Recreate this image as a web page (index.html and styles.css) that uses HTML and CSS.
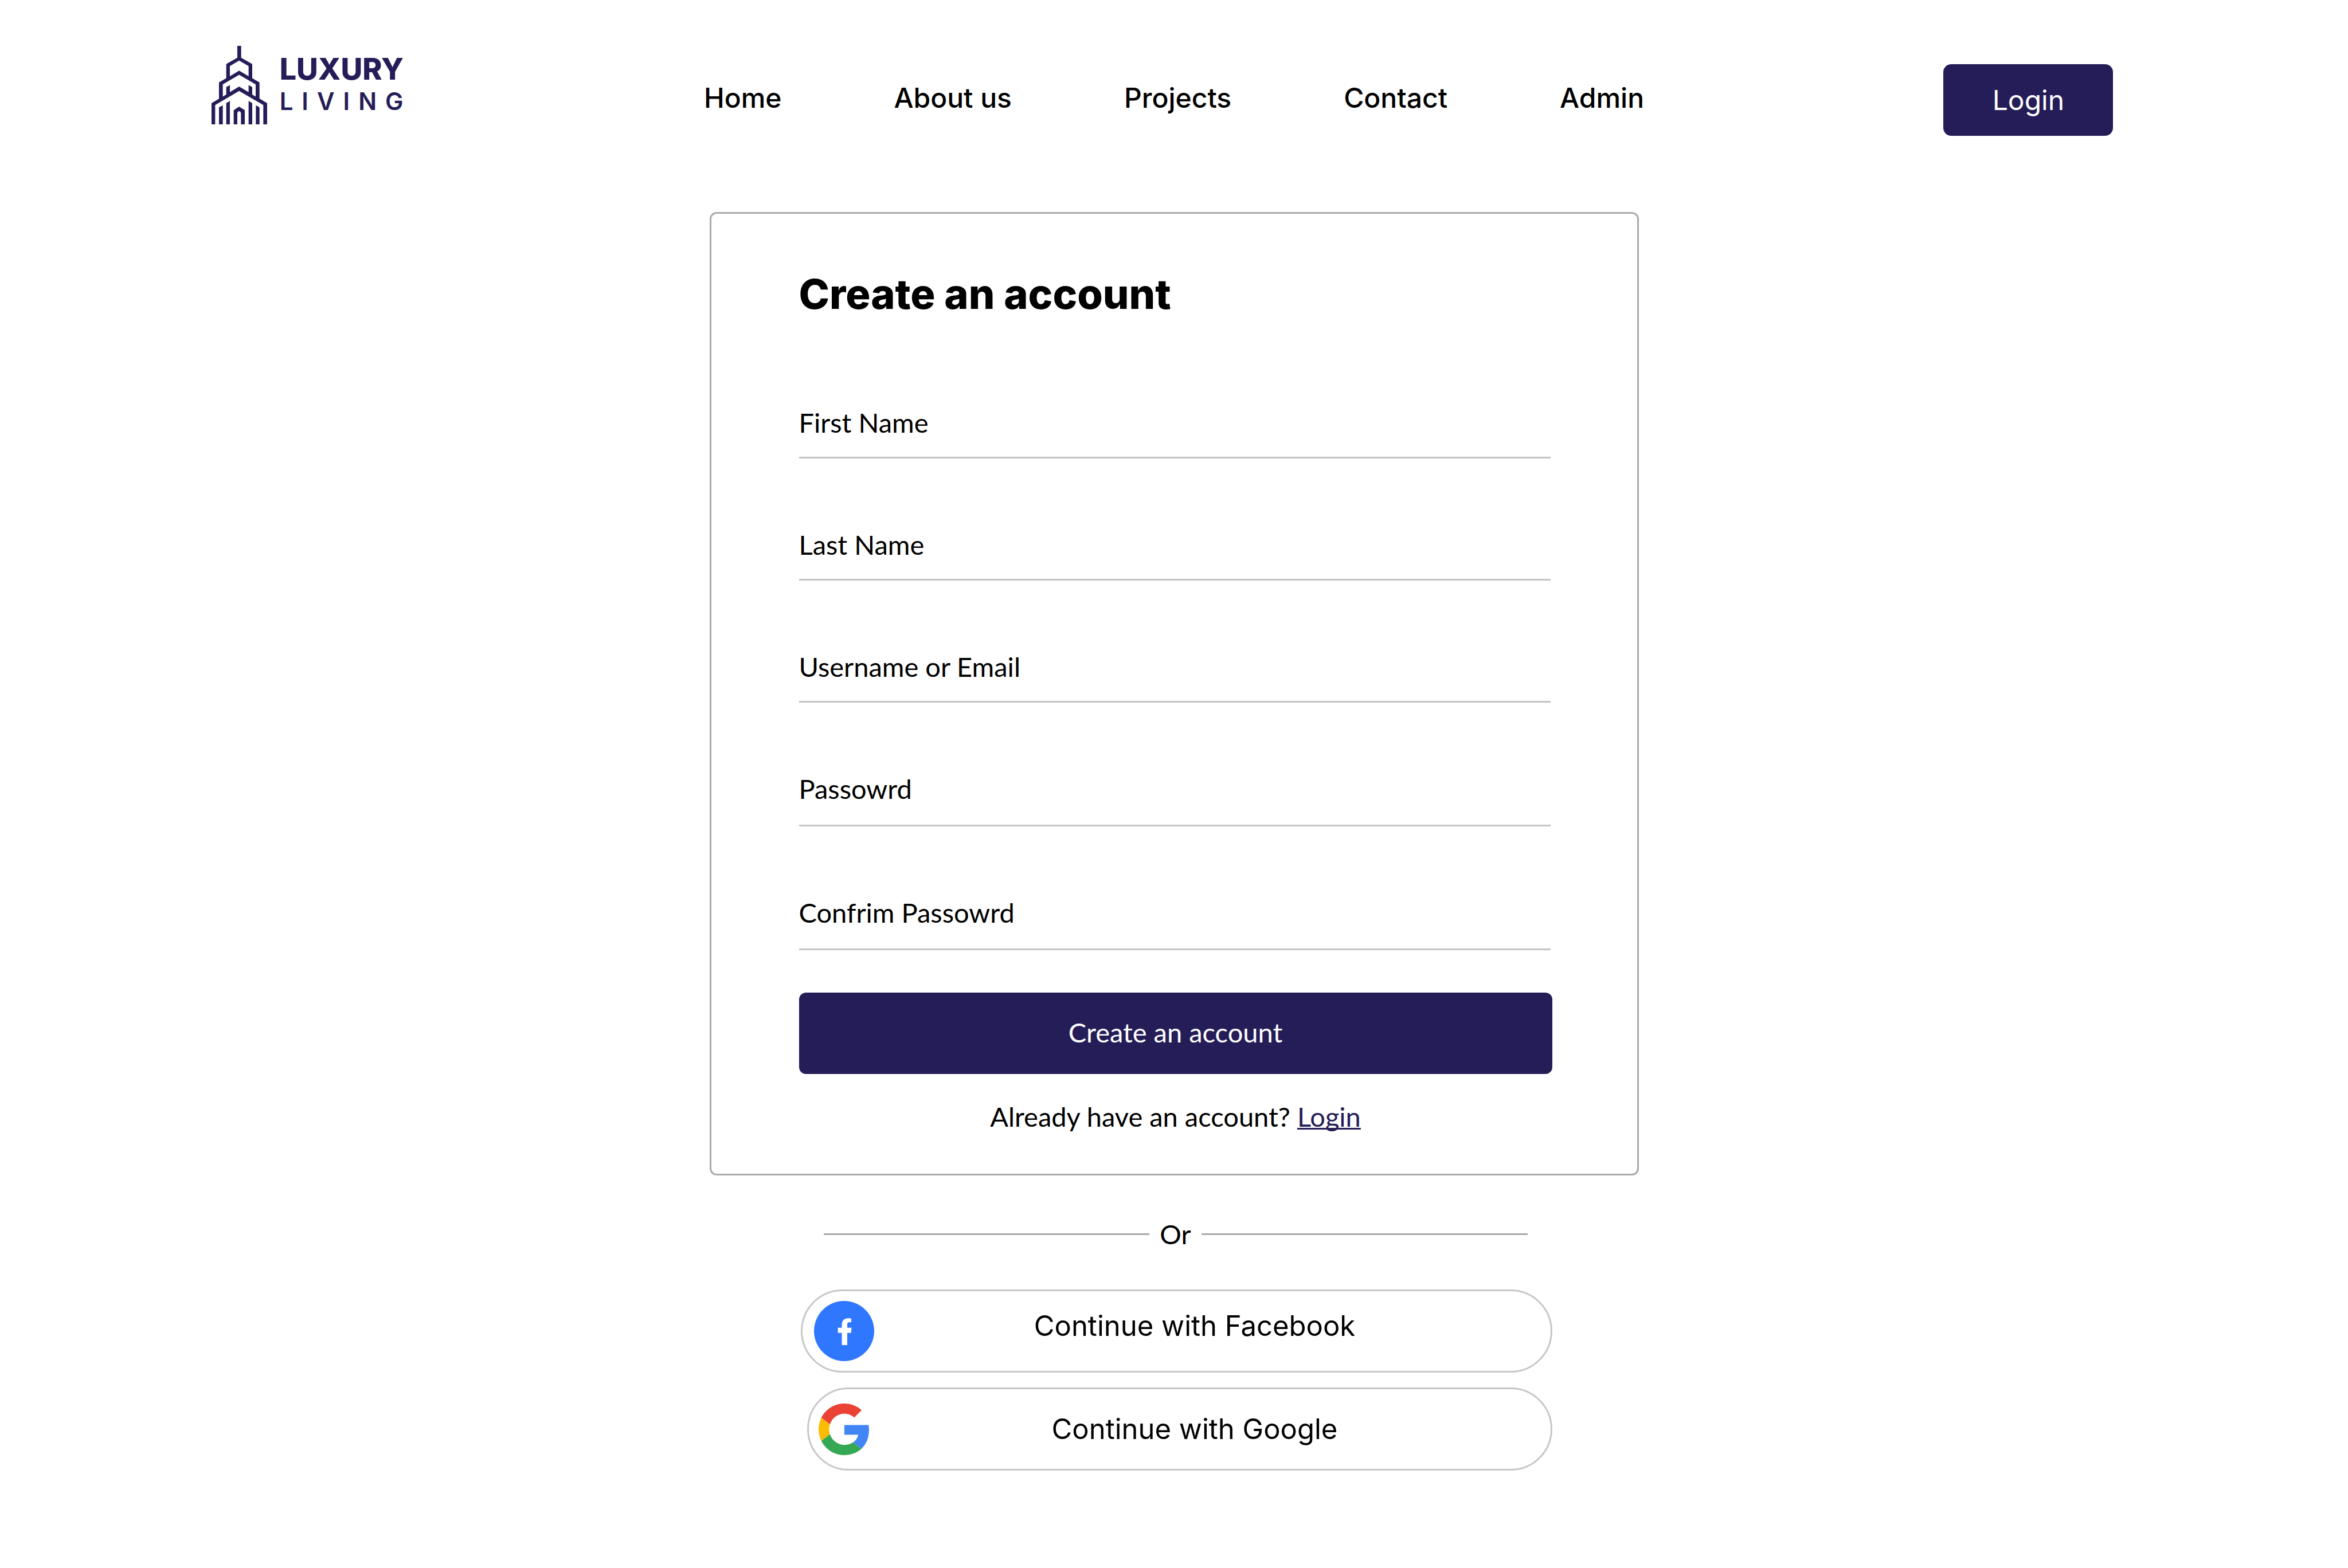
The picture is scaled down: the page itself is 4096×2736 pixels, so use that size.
FILE: index.html
```html
<!DOCTYPE html>
<html lang="en">
<head>
<meta charset="utf-8">
<meta name="viewport" content="width=device-width, initial-scale=1">
<title>Luxury Living</title>
<link rel="stylesheet" href="styles.css">
</head>
<body>
<header class="header">
  <a class="logo" href="#">
    <svg class="logo-icon" viewBox="60 72 306 432" aria-hidden="true">
      <path d="M202 72H223V137L284 172V250L324 273V362L366 387V504H345V398L212 320L80 398V504H60V387L101 363V273L141 250V172L202 137ZM161 183V239L212 208L264 239V183L212 153ZM122 284V351L141 340V299L161 288V327L212 296L264 327V288L284 299V340L303 351V284L212 231Z" fill-rule="evenodd"/>
      <path d="M101 410L122 399V504H101ZM141 387L161 375V504H141ZM264 375L284 387V504H264ZM304 399L324 410V504H304Z"/>
      <path d="M182 504V426L212 406L243 426V504H222V441L217 433Q212 430 207 433L202 441V504Z"/>
    </svg>
    <span class="logo-text">
      <span class="logo-name">LUXURY</span>
      <span class="logo-sub">LIVING</span>
    </span>
  </a>
  <nav class="nav">
    <a href="#">Home</a>
    <a href="#">About us</a>
    <a href="#">Projects</a>
    <a href="#">Contact</a>
    <a href="#">Admin</a>
  </nav>
  <button class="login-button" type="button">Login</button>
</header>

<main class="main">
  <form class="card">
    <h1 class="title">Create an account</h1>
    <div class="fields">
      <div class="field">
        <label for="first-name">First Name</label>
        <input id="first-name" type="text">
      </div>
      <div class="field">
        <label for="last-name">Last Name</label>
        <input id="last-name" type="text">
      </div>
      <div class="field">
        <label for="email">Username or Email</label>
        <input id="email" type="text">
      </div>
      <div class="field field-password">
        <label for="password">Passowrd</label>
        <input id="password" type="password">
      </div>
      <div class="field field-password">
        <label for="confirm">Confrim Passowrd</label>
        <input id="confirm" type="password">
      </div>
    </div>
    <button class="submit" type="submit">Create an account</button>
    <p class="signin">Already have an account? <a href="#">Login</a></p>
  </form>

  <section class="social">
    <div class="divider"><span>Or</span></div>
    <button class="social-button facebook" type="button">
      <svg class="facebook-icon" viewBox="81 72 333 333" aria-hidden="true">
        <circle cx="247.500" cy="238.500" r="166.500" fill="#3077ff"/>
        <path fill="#fff" d="M235 316V249H213V220H235V204C235 181 248 168 270 168C278 168 284 168 287 169V190H276C267 190 265 195 265 203V220H289L286 249H265V316Z"/>
      </svg>
      <span class="social-label">Continue with Facebook</span>
    </button>
    <button class="social-button google" type="button">
      <svg class="google-icon" viewBox="0 0 47 48" aria-hidden="true">
        <path fill="#ea4335" d="M24 9.500c3.540 0 6.710 1.220 9.210 3.600l6.850-6.850C35.900 2.380 30.470 0 24 0 14.620 0 6.510 5.380 2.560 13.220l7.980 6.190C12.430 13.720 17.740 9.500 24 9.500z"/>
        <path fill="#4285f4" d="M46.980 24.550c0-1.570-.150-3.090-.380-4.550H24v9.020h12.940c-.580 2.960-2.260 5.480-4.780 7.180l7.730 6c4.510-4.180 7.090-10.360 7.090-17.650z"/>
        <path fill="#fbbc05" d="M10.530 28.590c-.480-1.450-.760-2.990-.760-4.590s.270-3.140.760-4.590l-7.980-6.190C.920 16.460 0 20.120 0 24c0 3.880.920 7.540 2.560 10.780l7.970-6.190z"/>
        <path fill="#34a853" d="M24 48c6.480 0 11.930-2.130 15.890-5.810l-7.730-6c-2.150 1.450-4.920 2.300-8.160 2.300-6.260 0-11.570-4.220-13.470-9.910l-7.980 6.190C6.510 42.620 14.620 48 24 48z"/>
      </svg>
      <span class="social-label">Continue with Google</span>
    </button>
  </section>
</main>
</body>
</html>
```

FILE: styles.css
```css
*,
*::before,
*::after {
  box-sizing: border-box;
}

body {
  margin: 0;
  background: #fff;
  color: #000;
  font-family: Lato, "Liberation Sans", sans-serif;
  font-size: 47px;
  line-height: 60px;
}

button,
input {
  font: inherit;
}

button {
  border: 0;
  cursor: pointer;
}

/* Header */
.header {
  display: grid;
  grid-template-columns: 1fr auto 1fr;
  align-items: end;
  padding: 80px 9% 0;
}

.logo {
  display: flex;
  gap: 22px;
  margin-bottom: 20px;
  color: #251d58;
  text-decoration: none;
}

.logo-icon {
  width: 97px;
  height: 137px;
  fill: #251d58;
}

.logo-text {
  display: flex;
  flex-direction: column;
  padding-top: 15px;
  font-family: Inter, "Liberation Sans", sans-serif;
}

.logo-name {
  font-size: 52px;
  font-weight: 800;
  line-height: 52px;
}

.logo-sub {
  font-size: 42px;
  font-weight: 600;
  line-height: 60px;
  letter-spacing: 15px;
}

.nav {
  display: flex;
  gap: 196px;
  margin-bottom: 36px;
  font-family: Inter, "Liberation Sans", sans-serif;
  font-size: 48px;
  font-weight: 500;
}

.nav a {
  color: #000;
  text-decoration: none;
}

.login-button {
  justify-self: end;
  width: 296px;
  height: 125px;
  margin-right: 41px;
  border-radius: 14px;
  background: #251d58;
  color: #fff;
  font-family: Inter, "Liberation Sans", sans-serif;
  font-size: 48px;
}

/* Account form */
.main {
  display: flex;
  flex-direction: column;
  align-items: center;
  padding-top: 133px;
}

.card,
.social {
  width: 100%;
  max-width: 1621px;
}

.card {
  padding: 98px 148px 70px 153px;
  border: 3px solid #aaa;
  border-radius: 12px;
}

.title {
  margin: 0 0 32px;
  font-family: Inter, "Liberation Sans", sans-serif;
  font-size: 72px;
  font-weight: 800;
  line-height: 84px;
}

.fields {
  padding-right: 3px;
}

.field {
  display: grid;
  align-items: end;
  height: 213px;
}

.field label,
.field input {
  grid-area: 1 / 1;
}

.field label {
  padding-bottom: 33px;
}

.field input {
  width: 100%;
  height: 108px;
  padding: 0;
  border: 0;
  border-bottom: 3px solid #c4c4c4;
  background: transparent;
}

.field-password {
  height: 216px;
}

.field-password label {
  padding-bottom: 36px;
}

.submit {
  width: 100%;
  height: 142px;
  margin-top: 74px;
  padding-bottom: 6px;
  border-radius: 12px;
  background: #251d58;
  color: #fff;
}

.signin {
  margin: 44px 0 0;
  text-align: center;
}

.signin a {
  color: #251d58;
  text-decoration-thickness: 3px;
  text-decoration-skip-ink: none;
}

/* Other ways to sign up */
.social {
  display: flex;
  flex-direction: column;
  gap: 26px;
  padding: 72px 151px 80px 156px;
}

.divider {
  display: grid;
  grid-template-columns: 1fr 91px 1fr;
  align-items: center;
  margin: 0 43px 41px;
  text-align: center;
}

.divider::before,
.divider::after {
  content: "";
  height: 3px;
  background: #aaa;
}

.social-button {
  display: flex;
  align-items: center;
  height: 145px;
  padding: 0 61px 0 20px;
  border: 3px solid #c7c7c7;
  border-radius: 73px;
  background: #fff;
  color: #000;
  font-family: Inter, "Liberation Sans", sans-serif;
  font-size: 49px;
}

.social-label {
  flex: 1;
}

.facebook {
  margin-left: 3px;
}

.facebook .social-label {
  padding-bottom: 18px;
}

.facebook-icon {
  width: 105px;
  height: 105px;
}

.google {
  margin-left: 14px;
  padding-left: 17px;
}

.google-icon {
  width: 88px;
  height: 90px;
  margin-right: 9px;
}
```
